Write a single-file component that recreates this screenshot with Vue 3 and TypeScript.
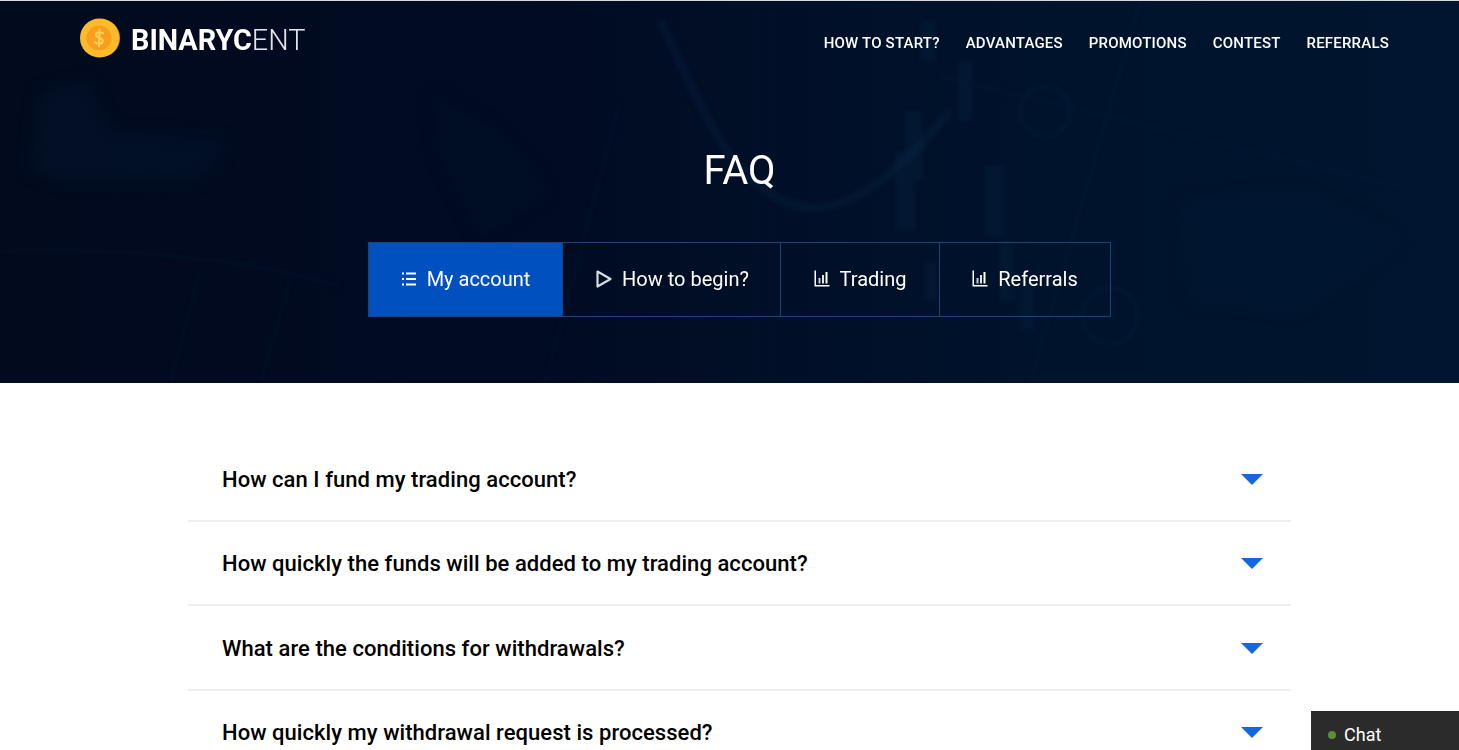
<script setup lang="ts">
const navLinks = ['How to start?', 'Advantages', 'Promotions', 'Contest', 'Referrals']

const tabs = [
  { label: 'My account', icon: 'list', width: 193 },
  { label: 'How to begin?', icon: 'play', width: 218 },
  { label: 'Trading', icon: 'chart', width: 159 },
  { label: 'Referrals', icon: 'chart', width: 171 },
]

const questions = [
  'How can I fund my trading account?',
  'How quickly the funds will be added to my trading account?',
  'What are the conditions for withdrawals?',
  'How quickly my withdrawal request is processed?',
]

const candles = [
  [905, 110, 18, 70], [958, 60, 14, 60], [895, 150, 20, 80], [985, 165, 20, 70],
  [1000, 240, 14, 60], [1020, 280, 14, 50], [925, 260, 12, 40], [920, 20, 16, 40],
]
</script>

<template>
  <div class="page">
    <section class="hero">
      <svg class="hero-bg soft" width="1479" height="383" viewBox="0 0 1479 383" fill="none" aria-hidden="true">
        <g fill="#0a3350" opacity="0.14">
          <path d="M40 90 L90 80 L110 130 L230 140 L200 180 L60 180 L30 170 Z" />
          <path d="M430 90 L500 130 L550 190 L480 240 L440 160 Z" opacity="0.6" />
          <path d="M1180 200 L1300 190 L1400 240 L1300 310 L1190 300 Z" opacity="0.6" />
        </g>
      </svg>
      <svg class="hero-bg" width="1479" height="383" viewBox="0 0 1479 383" fill="none" aria-hidden="true">
        <g fill="#0a3350" opacity="0.2">
          <rect v-for="(c, i) in candles" :key="i" :x="c[0]" :y="c[1]" :width="c[2]" :height="c[3]" />
        </g>
        <g stroke="#0b3554" fill="none" opacity="0.22">
          <path d="M660 20 C700 100 730 190 800 205 C850 215 900 170 950 110" stroke-width="9" />
          <path d="M940 75 L1459 200" stroke-width="1.5" />
          <circle cx="1045" cy="110" r="25" stroke-width="3" />
          <circle cx="1110" cy="315" r="28" stroke-width="3" />
          <path d="M0 250 C120 245 260 260 340 285" stroke-width="2" />
          <path d="M170 383 L200 270 M260 383 L290 280 M545 383 L620 100 M1030 383 L1140 0" stroke-width="1.5" />
        </g>
      </svg>

      <header class="topbar">
        <a class="logo">
          <svg class="coin" width="40" height="40" viewBox="0 0 40 40" aria-hidden="true">
            <circle cx="21" cy="20" r="19" fill="#e09a1a" />
            <circle cx="19.5" cy="20" r="19.5" fill="#fdbb2c" />
            <circle cx="19" cy="20" r="12.5" fill="#fb9e1d" />
            <path d="M23 15.5 C22 13.8 16 13.5 15.8 16.8 C15.6 20.2 23 19.5 22.8 23.2 C22.6 26.5 16.5 26.2 15 24.2 M19.6 11.5 L19 28.5" fill="none" stroke="#ffd15a" stroke-width="2.1" stroke-linecap="round" />
          </svg>
          <span class="logo-text"><b>BINARYC</b><span>ENT</span></span>
        </a>
        <nav class="nav">
          <a v-for="link in navLinks" :key="link">{{ link }}</a>
        </nav>
      </header>

      <h1 class="title">FAQ</h1>

      <div class="tabs">
        <button
          v-for="(tab, i) in tabs"
          :key="tab.label"
          class="tab"
          :class="{ active: i === 0 }"
          :style="{ width: tab.width + 'px' }"
        >
          <svg v-if="tab.icon === 'list'" width="16" height="16" viewBox="0 0 16 16" fill="#fff" aria-hidden="true">
            <rect x="1" y="1.5" width="2" height="2" />
            <rect x="5" y="1.5" width="10" height="2" />
            <rect x="1" y="7" width="2" height="2" />
            <rect x="5" y="7" width="10" height="2" />
            <rect x="1" y="12.5" width="2" height="2" />
            <rect x="5" y="12.5" width="10" height="2" />
          </svg>
          <svg v-else-if="tab.icon === 'play'" width="16" height="18" viewBox="0 0 16 18" fill="none" aria-hidden="true">
            <path d="M1.5 1.5 L14.5 9 L1.5 16.5 Z" stroke="#d8dbe0" stroke-width="2.2" stroke-linejoin="round" />
          </svg>
          <svg v-else width="16" height="17" viewBox="0 0 16 17" fill="#fff" aria-hidden="true">
            <path d="M0.5 0.5 H2 V15 H15.5 V16.5 H0.5 Z" />
            <rect x="4.5" y="8" width="2" height="5.5" fill="#c9ccd2" />
            <rect x="8" y="5" width="2" height="8.5" fill="#e2e4e8" />
            <rect x="11.5" y="2" width="2" height="11.5" />
          </svg>
          <span>{{ tab.label }}</span>
        </button>
      </div>
    </section>

    <main class="faq">
      <div v-for="q in questions" :key="q" class="faq-row">
        <span class="question">{{ q }}</span>
        <span class="arrow"></span>
      </div>
    </main>

    <div class="chat">
      <span class="dot"></span>
      <span>Chat</span>
    </div>
  </div>
</template>

<style>
html,
body {
  margin: 0;
  overflow: hidden;
  height: 750px;
  background: #fff;
}
</style>

<style scoped>
.page {
  width: 1479px;
  height: 750px;
  overflow: hidden;
  font-family: Roboto, 'Liberation Sans', sans-serif;
}

.hero {
  position: relative;
  height: 383px;
  box-sizing: border-box;
  border-top: 1px solid #d9d9d9;
  background: linear-gradient(90deg, #020a1e 0%, #010b22 35%, #00132c 70%, #00152f 100%);
  display: flex;
  flex-direction: column;
  align-items: center;
  overflow: hidden;
}

.hero-bg {
  position: absolute;
  top: 0;
  left: 0;
  filter: blur(2px);
}

.hero-bg.soft {
  filter: blur(9px);
}

.topbar {
  position: relative;
  align-self: stretch;
  display: flex;
  justify-content: space-between;
  align-items: flex-start;
  padding: 17px 90px 0 80px;
  height: 80px;
  box-sizing: border-box;
}

.logo {
  display: flex;
  align-items: center;
  gap: 11px;
  height: 40px;
}

.coin {
  display: block;
}

.logo-text {
  font-size: 28.8px;
  line-height: 40px;
  padding-top: 3px;
  color: #fff;
  white-space: nowrap;
}

.logo-text b {
  font-weight: 700;
}

.logo-text span {
  font-weight: 300;
  color: #e4e7ea;
}

.nav {
  display: flex;
  gap: 26px;
  padding-top: 16px;
}

.nav a {
  color: #fff;
  font-size: 15px;
  font-weight: 500;
  letter-spacing: 0.2px;
  line-height: 18px;
  text-transform: uppercase;
  white-space: nowrap;
}

.title {
  position: relative;
  margin: 65px 0 0;
  color: #fff;
  font-size: 40px;
  font-weight: 400;
  line-height: 50px;
}

.tabs {
  position: relative;
  display: flex;
  margin-top: 46px;
  height: 75px;
  box-sizing: border-box;
  border: 1px solid #1d4478;
}

.tab {
  display: flex;
  align-items: center;
  justify-content: center;
  gap: 10px;
  padding: 0 0 2px;
  border: 0;
  border-left: 1px solid #1d4478;
  background: none;
  color: #fff;
  font-family: inherit;
  font-size: 20px;
  line-height: 24px;
  box-sizing: border-box;
}

.tab:first-child {
  border-left: 0;
}

.tab:nth-child(2) {
  padding-left: 2px;
}

.tab.active {
  background: #0050c0;
}

.faq {
  width: 1103px;
  margin: 54.25px auto 0;
}

.faq-row {
  display: flex;
  align-items: center;
  justify-content: space-between;
  height: 84.5px;
  box-sizing: border-box;
  padding: 1.5px 28px 0 34px;
  border-bottom: 2px solid #eeeeee;
}

.question {
  color: #000;
  font-size: 22px;
  font-weight: 500;
  letter-spacing: 0.05px;
}

.arrow {
  width: 0;
  height: 0;
  border-left: 11px solid transparent;
  border-right: 11px solid transparent;
  border-top: 11px solid #1467e0;
}

.chat {
  position: fixed;
  right: 0;
  bottom: 0;
  width: 148px;
  height: 39px;
  box-sizing: border-box;
  padding: 8px 0 0 17px;
  display: flex;
  align-items: center;
  gap: 8px;
  background: #2b2b2b;
  color: #fff;
  font-size: 18px;
}

.dot {
  width: 8px;
  height: 8px;
  border-radius: 50%;
  background: #5a9030;
}
</style>
